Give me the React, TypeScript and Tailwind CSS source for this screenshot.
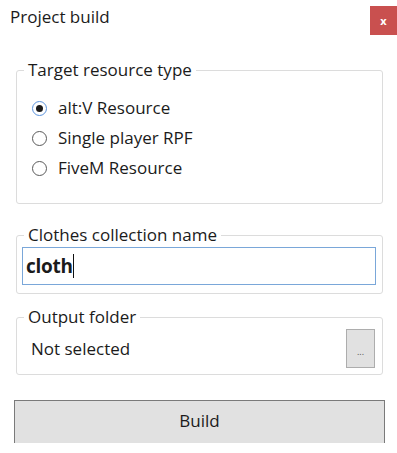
export default function App() {
  const options = [
    { label: "alt:V Resource", checked: true },
    { label: "Single player RPF", checked: false },
    { label: "FiveM Resource", checked: false },
  ];

  return (
    <div
      className="w-[397px] h-[453px] bg-white text-[#1b1b1b] overflow-hidden"
      style={{ fontFamily: '"Open Sans", "Noto Sans", sans-serif' }}
    >
      {/* title bar */}
      <div className="flex items-start justify-between h-[58px]">
        <div className="pl-[10px] pt-[5px] text-[17px] leading-[24px]">Project build</div>
        <div className="mt-[6px] w-[27px] h-[29px] bg-[#c9504f] flex items-center justify-center text-white text-[11px] font-bold leading-none">
          x
        </div>
      </div>

      <div className="pl-[16px] pr-[14px] flex flex-col text-[17px] leading-[24px]">
        {/* target resource type */}
        <fieldset className="border border-[#dcdcdc] rounded-[3px] pl-[7px] pr-[7px] h-[146px]">
          <legend className="px-[4px]">Target resource type</legend>
          <div className="flex flex-col gap-[6px] pt-[14px] pl-[8px]">
            {options.map((o) => (
              <label key={o.label} className="flex items-center gap-[11px] h-[24px]">
                <span
                  className={
                    o.checked
                      ? "w-[15px] h-[15px] rounded-full border border-[#5b93dc] bg-white flex items-center justify-center"
                      : "w-[15px] h-[15px] rounded-full border border-[#5a5a5a] bg-white"
                  }
                >
                  {o.checked && <span className="w-[7px] h-[7px] rounded-full bg-[#1b1b1b]" />}
                </span>
                {o.label}
              </label>
            ))}
          </div>
        </fieldset>

        {/* clothes collection name */}
        <fieldset className="mt-[19px] border border-[#dcdcdc] rounded-[3px] pl-[5px] pr-[6px] pb-[8px]">
          <legend className="ml-[2px] px-[4px]">Clothes collection name</legend>
          <div className="h-[38px] border border-[#7aa7d9] flex items-center px-[3px]">
            <span className="text-[19px] font-bold tracking-[-0.3px]">cloth</span>
            <span className="w-[1px] h-[24px] bg-[#111]" />
          </div>
        </fieldset>

        {/* output folder */}
        <fieldset className="mt-[11px] border border-[#dcdcdc] rounded-[3px] pl-[7px] pr-[7px] pb-[6px]">
          <legend className="px-[4px]">Output folder</legend>
          <div className="flex items-center justify-between">
            <span className="pl-[7px]">Not selected</span>
            <div className="w-[29px] h-[39px] bg-[#e1e1e1] border border-[#adadad] flex items-center justify-center pt-[6px] text-[9px] text-[#555] leading-none">
              ...
            </div>
          </div>
        </fieldset>

        {/* build */}
        <div className="mt-[25px] -mx-[2px] h-[43px] bg-[#e1e1e1] border border-b-0 border-[#7a7a7a] flex justify-center pt-[8px]">
          Build
        </div>
      </div>
    </div>
  );
}
